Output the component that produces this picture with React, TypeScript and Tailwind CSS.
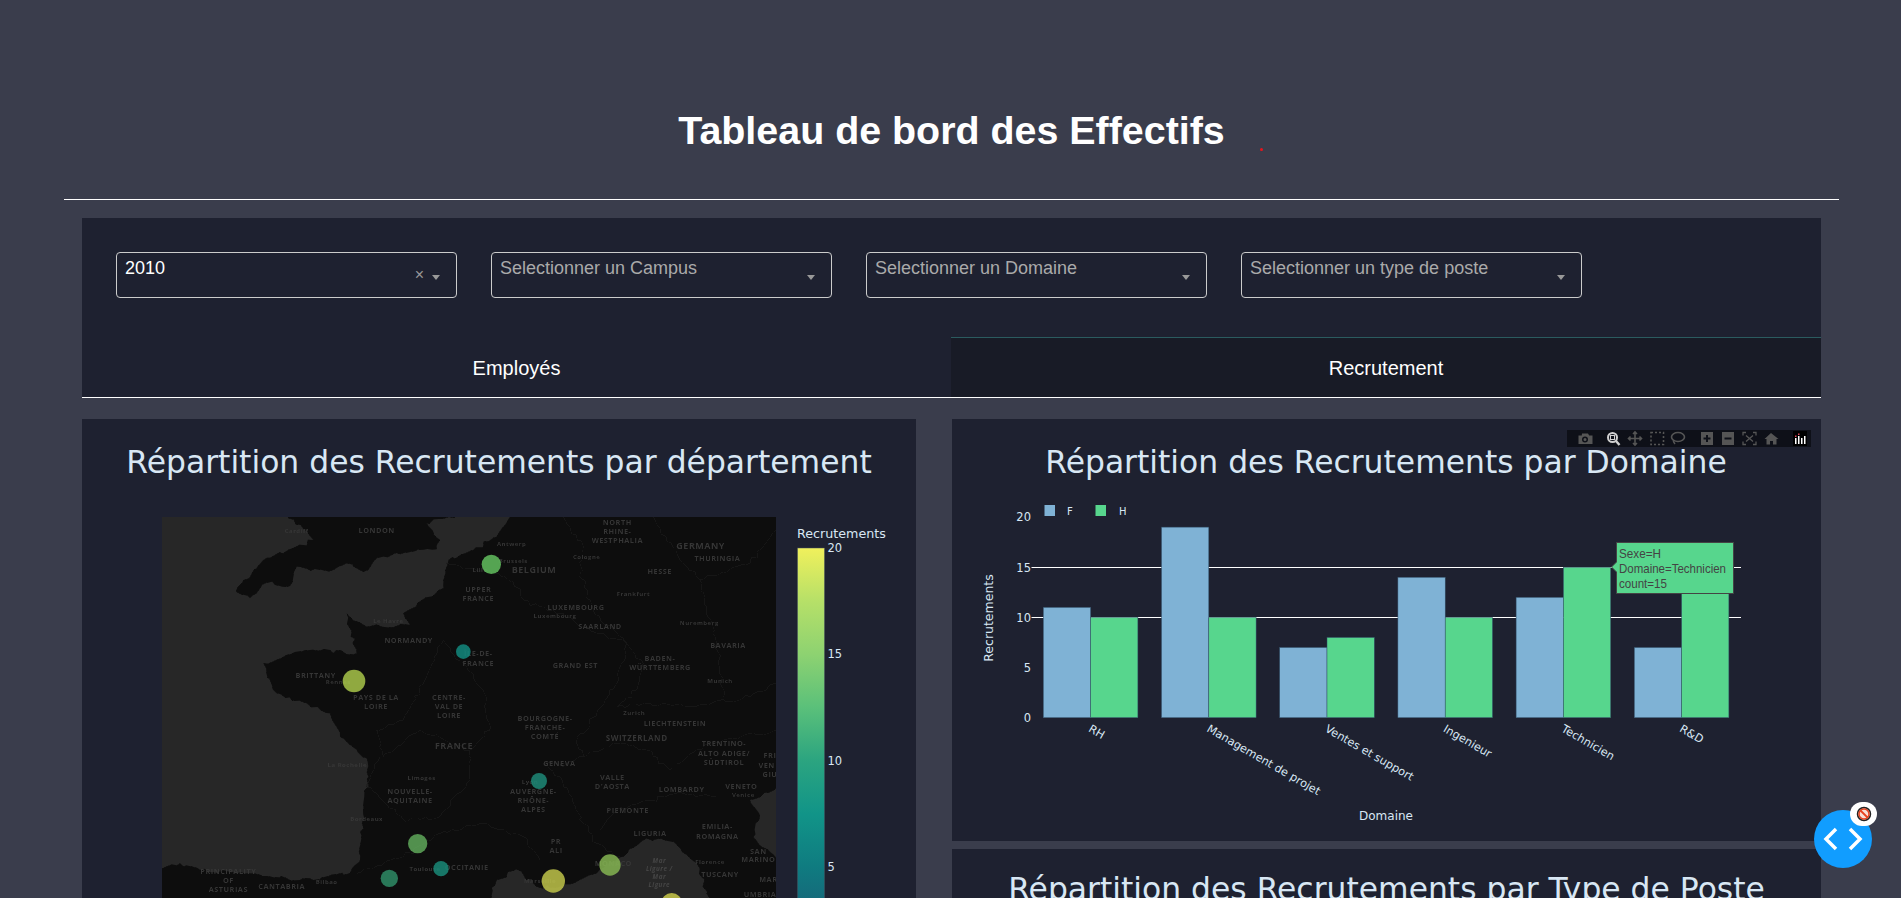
import React from 'react';

const plotFont = '"DejaVu Sans", Verdana, sans-serif';
const SEA = '#272727';
const LAND = '#0a0a0a';
const INK = '#d8e7f4';

// map coordinates are in a 3x space, x from 36, y from 21
const labels: [string, number, number, number?][] = [
  ['Cardiff', 440, 70, 18], ['LONDON', 680, 68, 22], ['Antwerp', 1085, 107, 18], ['Brussels', 1090, 158, 18],
  ['Lille', 990, 187, 18], ['BELGIUM', 1152, 189, 27], ['UPPER', 985, 246], ['FRANCE', 985, 274],
  ['NORTH', 1402, 45], ['RHINE-', 1402, 73], ['WESTPHALIA', 1402, 100], ['Cologne', 1310, 146, 18],
  ['Frankfurt', 1450, 257, 18], ['LUXEMBOURG', 1278, 299], ['Luxembourg', 1215, 325, 18], ['SAARLAND', 1350, 357],
  ['Le Havre', 715, 339, 18], ['NORMANDY', 776, 399], ['ÎLE-DE-', 985, 439], ['FRANCE', 985, 467],
  ['GRAND EST', 1276, 475], ['BRITTANY', 497, 503], ['Rennes', 565, 521, 18], ['PAYS DE LA', 678, 569],
  ['LOIRE', 678, 597], ['CENTRE-', 897, 569], ['VAL DE', 897, 597], ['LOIRE', 897, 625],
  ['BOURGOGNE-', 1185, 633], ['FRANCHE-', 1185, 660], ['COMTÉ', 1185, 688], ['FRANCE', 912, 718, 27],
  ['GENEVA', 1228, 767], ['La Rochelle', 592, 770, 18], ['Limoges', 815, 811, 18], ['Lyon', 1140, 821, 18],
  ['NOUVELLE-', 780, 853], ['AQUITAINE', 780, 880], ['AUVERGNE-', 1150, 853], ['RHÔNE-', 1150, 880],
  ['ALPES', 1150, 907], ['Bordeaux', 650, 933, 18], ['PR', 1218, 1003], ['ALI', 1218, 1030],
  ['Toulouse', 825, 1082, 18], ['OCCITANIE', 950, 1079], ['PRINCIPALITY', 235, 1092], ['OF', 235, 1119],
  ['ASTURIAS', 235, 1147], ['CANTABRIA', 395, 1138], ['Bilbao', 530, 1123, 18], ['Marseille', 1170, 1118, 18],
  ['MONACO', 1390, 1069], ['GERMANY', 1652, 117, 27], ['THURINGIA', 1702, 152], ['HESSE', 1529, 192],
  ['Nuremberg', 1648, 346, 18], ['BAVARIA', 1734, 413], ['BADEN-', 1530, 453], ['WÜRTTEMBERG', 1530, 481],
  ['Munich', 1710, 518, 18], ['Zurich', 1453, 616, 18], ['LIECHTENSTEIN', 1575, 648], ['SWITZERLAND', 1460, 692, 24],
  ['TRENTINO-', 1722, 709], ['ALTO ADIGE/', 1722, 737], ['SÜDTIROL', 1722, 765], ['VALLE', 1387, 810],
  ["D'AOSTA", 1387, 838], ['LOMBARDY', 1595, 846], ['VENETO', 1774, 836], ['Venice', 1780, 860, 18],
  ['PIEMONTE', 1433, 908], ['LIGURIA', 1500, 979], ['EMILIA-', 1702, 958], ['ROMAGNA', 1702, 986],
  ['SAN', 1825, 1032], ['MARINO', 1825, 1056], ['Florence', 1680, 1062, 18], ['TUSCANY', 1710, 1102],
  ['UMBRIA', 1830, 1160], ['FRI', 1860, 745], ['VEN', 1850, 773], ['GIU', 1860, 801], ['MAR', 1855, 1115],
];

const borders = [
  'M890 160L960 175L1030 190L1090 215L1120 270L1170 290L1240 310L1290 350L1430 400L1400 520L1340 610L1280 700L1300 740L1240 770L1180 760',
  'M1180 760L1230 800L1270 880L1300 940L1340 1000L1410 1040',
  'M1430 400L1480 460L1460 540L1400 590L1500 580L1620 590L1800 560L1878 520',
  'M1300 740L1400 700L1490 720L1560 780L1640 720L1720 690L1878 660',
  'M1240 21L1300 110L1290 190L1330 300L1430 400',
  'M620 1090L760 1040L870 970L990 940L1120 980L1170 1050',
  'M880 390L830 500L760 630L680 660L700 740L810 660L960 720L1020 660L1000 540L880 390',
  'M690 740L650 830L760 930L870 920L960 810L960 720',
  'M1510 21L1590 150L1650 210L1700 400L1720 560',
  'M1650 210L1800 160L1878 60',
  'M1700 860L1600 850L1500 870L1400 900L1350 960',
];

// outlines run well past the map frame so the jitter can't open gaps at its edges
const britain = 'M380 -20L490 90L340 150L258 245L300 265L350 218L420 228L440 170L530 183L590 160L640 185L700 140L860 118L870 90L830 40L1060 -20Z';
const continent = 'M1110 -20L1040 80L970 120L895 150L880 235L760 310L780 345L650 350L590 310L620 430L480 420L340 460L380 550L470 580L540 610L570 680L650 745L655 800L640 900L630 1050L600 1090L450 1110L300 1090L150 1080L90 1060L0 1090L0 1210L1000 1210L1040 1110L1100 1078L1160 1130L1230 1130L1340 1090L1420 1040L1490 985L1570 995L1640 1060L1690 1210L1920 1210L1920 1080L1810 980L1830 920L1800 870L1920 820L1920 -20Z';

// breaks straight segments up so coasts and borders don't look ruled
function rough(d: string, amp: number) {
  const closed = d.endsWith('Z');
  const pts = d.replace(/[MZ]/g, '').split('L').map((p) => p.trim().split(' ').map(Number));
  let seed = 7;
  const next = () => {
    seed = (seed * 9301 + 49297) % 233280;
    return seed / 233280 - 0.5;
  };
  const out: string[] = [];
  pts.forEach(([x, y], i) => {
    const to = pts[i + 1];
    out.push(`${x} ${y}`);
    if (!to) return;
    const steps = Math.max(1, Math.round(Math.hypot(to[0] - x, to[1] - y) / 14));
    for (let s = 1; s < steps; s++) {
      const t = s / steps;
      out.push(`${(x + (to[0] - x) * t + next() * amp).toFixed(1)} ${(y + (to[1] - y) * t + next() * amp).toFixed(1)}`);
    }
  });
  return `M${out.join('L')}${closed ? 'Z' : ''}`;
}

const bubbles = [
  [1024, 163, 29, '#63c05f'], [940, 425, 22, '#138a7f'], [612, 513, 34, '#a8c64a'], [1167, 813, 24, '#1e8a78'],
  [803, 1001, 29, '#5fa85a'], [873, 1076, 23, '#1a8a78'], [718, 1105, 26, '#2f8c66'], [1210, 1113, 35, '#c0c44a'],
  [1380, 1065, 32, '#85b552'], [1565, 1180, 31, '#c8c84a'],
];

const MapPlot = () => (
  <svg className="block" width="834" height="479" viewBox="82 419 834 479" style={{ fontFamily: plotFont }}>
    <text x="499" y="472.5" textAnchor="middle" fontSize="31.4" fill={INK}>Répartition des Recrutements par département</text>
    <svg x="162" y="517" width="614" height="381" viewBox="36 21 1842 1143">
      <defs>
        <filter id="mapBlur"><feGaussianBlur stdDeviation="1.3" /></filter>
      </defs>
      <rect x="36" y="21" width="1842" height="1143" fill={SEA} />
      <g filter="url(#mapBlur)">
        <path fill={LAND} d={rough(britain, 12)} />
        <path fill={LAND} d={rough(continent, 12)} />
        <g fill="none" stroke="#1b1b1b" strokeWidth="2.5">
          {borders.map((d) => <path key={d} d={rough(d, 14)} />)}
        </g>
        <g fontFamily='"Open Sans", sans-serif' fontWeight="700" textAnchor="middle" fill="#363636" letterSpacing="1.5">
          {labels.map(([t, x, y, s]) => <text key={t + x} x={x} y={y} fontSize={s ?? 22}>{t}</text>)}
          {['Mar', 'Ligure /', 'Mar', 'Ligure'].map((t, i) => (
            <text key={i} x="1528" y={1060 + i * 24} fontSize="19" fontStyle="italic" fill="#444">{t}</text>
          ))}
        </g>
      </g>
      {bubbles.map(([x, y, r, c]) => (
        <circle key={`${x}`} cx={x} cy={y} r={r} fill={c as string} fillOpacity="0.85" />
      ))}
    </svg>
    <defs>
      <linearGradient id="viridis" x1="0" y1="0" x2="0" y2="1">
        <stop offset="0" stopColor="#f0f05c" />
        <stop offset="0.125" stopColor="#b6e068" />
        <stop offset="0.25" stopColor="#8dd271" />
        <stop offset="0.375" stopColor="#5ac07a" />
        <stop offset="0.5" stopColor="#2ba480" />
        <stop offset="0.625" stopColor="#119488" />
        <stop offset="0.75" stopColor="#0f7b80" />
        <stop offset="1" stopColor="#24456f" />
      </linearGradient>
    </defs>
    <rect x="797.5" y="548" width="27" height="426" fill="url(#viridis)" stroke="#44505c" strokeWidth="0.5" />
    <text x="797" y="538" fontSize="12.7" fill={INK}>Recrutements</text>
    {[['20', 552], ['15', 658], ['10', 765], ['5', 871]].map(([t, y]) => (
      <text key={t} x="827.5" y={y} fontSize="11.5" fill={INK}>{t}</text>
    ))}
  </svg>
);

const groups = [
  { name: 'RH', f: 11, h: 10 },
  { name: 'Management de projet', f: 19, h: 10 },
  { name: 'Ventes et support', f: 7, h: 8 },
  { name: 'Ingenieur', f: 14, h: 10 },
  { name: 'Technicien', f: 12, h: 15 },
  { name: 'R&D', f: 7, h: 13 },
];

const BarPlot = () => {
  const base = 717.7;
  const unit = 10.03;
  return (
    <svg className="block" width="869" height="422" viewBox="952 419 869 422" style={{ fontFamily: plotFont }}>
      <text x="1386" y="472.5" textAnchor="middle" fontSize="31.4" fill={INK}>Répartition des Recrutements par Domaine</text>
      <line x1="1031.5" x2="1741" y1="567.5" y2="567.5" stroke="#fff" />
      <line x1="1031.5" x2="1741" y1="617.5" y2="617.5" stroke="#fff" />
      {[['20', 521], ['15', 571.5], ['10', 621.5], ['5', 671.5], ['0', 722]].map(([t, y]) => (
        <text key={t} x="1031" y={y} textAnchor="end" fontSize="11.5" fill={INK}>{t}</text>
      ))}
      {groups.map((g, i) => {
        const x = 1043.3 + i * 118.2;
        return (
          <g key={g.name} strokeWidth="0.5" stroke="#33506a">
            <rect x={x} y={base - g.f * unit} width="47.3" height={g.f * unit} fill="#7fb2d5" />
            <rect x={x + 47.3} y={base - g.h * unit} width="47.3" height={g.h * unit} fill="#57d68d" />
            <text x={x + 44.5} y="731" fontSize="11.3" stroke="none" fill={INK} transform={`rotate(30 ${x + 44.5} 731)`}>{g.name}</text>
          </g>
        );
      })}
      <text transform="rotate(-90 993 618)" x="993" y="618" textAnchor="middle" fontSize="12.5" fill={INK}>Recrutements</text>
      <text x="1386" y="820" textAnchor="middle" fontSize="12" fill={INK}>Domaine</text>
      <rect x="1044.5" y="505" width="10.5" height="11" fill="#7fb2d5" />
      <text x="1067" y="515" fontSize="10" fill={INK}>F</text>
      <rect x="1095.5" y="505" width="10.5" height="11" fill="#57d68d" />
      <text x="1119" y="515" fontSize="10" fill={INK}>H</text>
      <path d="M1611.5 567L1616.500 562V542.500H1733.500V593.500H1616.500V572Z" fill="#57d68d" stroke="#444" strokeWidth="1" />
      <g fontFamily='"Liberation Sans", Arial, sans-serif' fontSize="13" fill="#444">
        <text x="1619" y="558" textLength="42" lengthAdjust="spacingAndGlyphs">Sexe=H</text>
        <text x="1619" y="573" textLength="107" lengthAdjust="spacingAndGlyphs">Domaine=Technicien</text>
        <text x="1619" y="588" textLength="48" lengthAdjust="spacingAndGlyphs">count=15</text>
      </g>
    </svg>
  );
};

const ModeBar = () => (
  <div className="absolute left-[615px] top-[11px] flex h-[17px] w-[244px] bg-[#0e1018]">
    <svg width="244" height="17" viewBox="0 0 244 17">
      <g fill="#555">
        {/* camera */}
        <path fillRule="evenodd" d="M15 3.500h6l1.200 2h3.300v8.500h-14v-8.500h3.300zM18 6.500a3 3 0 1 0 0 6a3 3 0 0 0 0-6zM18 8a1.500 1.500 0 1 1 0 3a1.500 1.500 0 0 1 0-3z" />
      </g>
      {/* zoom, active */}
      <g fill="none" stroke="#d0d0d0">
        <circle cx="45.500" cy="7.500" r="4.500" strokeWidth="2" />
        <rect x="43.500" y="5.500" width="4" height="4" strokeWidth="1" />
        <path d="M49 11l3.500 4" strokeWidth="2.400" />
      </g>
      <g fill="none" stroke="#555" strokeWidth="1.600">
        {/* pan */}
        <path d="M68 2v13M61.500 8.500h13M66 4l2-2 2 2M66 13l2 2 2-2M63.500 6.500l-2 2 2 2M72.500 6.500l2 2-2 2" />
        {/* box select */}
        <rect x="84" y="2.500" width="12.500" height="12" strokeDasharray="2 2" />
        {/* lasso */}
        <ellipse cx="111" cy="7" rx="6.500" ry="4.500" />
        <path d="M106.500 10c-.5 2 .5 3 1.500 4" />
      </g>
      <g fill="#555">
        <path fillRule="evenodd" d="M134 2h12v13h-12zM139 5v2.500h-2.500v2h2.500v2.500h2v-2.500h2.500v-2h-2.500v-2.500z" />
        <path fillRule="evenodd" d="M155 2h12v13h-12zM157.500 7.500v2h7v-2z" />
        <path d="M204 3l7.500 6h-2v5.500h-3.500v-3.500h-3v3.500h-3.500v-5.500h-2z" />
      </g>
      <g fill="none" stroke="#555" strokeWidth="1.300">
        <path d="M176 5.500v-3h3M186 2.500h3v3M189 11.500v3h-3M179 14.500h-3v-3" />
        <path d="M179 5.500l7 6M186 5.500l-7 6" />
      </g>
      <rect x="226" y="1" width="14" height="15" fill="#000" />
      <g fill="#fff">
        <rect x="228" y="8" width="1.500" height="6" />
        <rect x="231" y="6" width="1.500" height="8" />
        <rect x="234" y="8" width="1.500" height="6" />
        <rect x="237" y="6" width="1.500" height="8" />
      </g>
      <g fill="#e0435a">
        <rect x="228" y="5.500" width="1.500" height="1.500" />
        <rect x="231" y="3.500" width="1.500" height="1.500" />
      </g>
    </svg>
  </div>
);

const Dropdown = ({ label, selected }: { label: string; selected?: boolean }) => (
  <div className="relative h-[46px] w-[341px] rounded border border-[#cccccc] bg-[#1e2130] pl-[8px] pt-[3px] text-[18px] leading-[25px]">
    <span className={selected ? 'text-white' : 'text-[#aaaaaa]'}>{label}</span>
    {selected && <span className="absolute right-[32px] top-[13px] text-[16px] leading-[18px] text-[#999]">×</span>}
    <span className="absolute right-[16px] top-[22px] h-0 w-0 border-x-[4px] border-t-[5px] border-x-transparent border-t-[#999]" />
  </div>
);

export default function App() {
  return (
    <div className="relative h-screen overflow-hidden bg-[#3a3d4c] text-white" style={{ fontFamily: '"Liberation Sans", Arial, sans-serif' }}>
      <div className="ml-[64px] w-[1775px]">
        <h1 className="pt-[107px] pb-[46px] text-center text-[39.4px] font-bold leading-[46px]">Tableau de bord des Effectifs</h1>
        <hr className="border-0 border-t border-white" />
        <div className="mx-[18px] mt-[18px] w-[1739px] bg-[#1e2130]">
          <div className="flex gap-[34px] px-[34px] pt-[34px] pb-[39px]">
            <Dropdown label="2010" selected />
            <Dropdown label="Selectionner un Campus" />
            <Dropdown label="Selectionner un Domaine" />
            <Dropdown label="Selectionner un type de poste" />
          </div>
          <div className="flex h-[61px] border-b border-white text-[20px]">
            <div className="flex w-[869px] items-center justify-center pt-[2px]">Employés</div>
            <div className="flex flex-1 items-center justify-center border-t border-[#2b5b5f] bg-[#181b26] pt-[1px]">Recrutement</div>
          </div>
        </div>
        <div className="mx-[18px] mt-[21px] flex w-[1739px] gap-[36px]">
          <div className="w-[834px] shrink-0 bg-[#1e2130]">
            <MapPlot />
          </div>
          <div className="flex flex-1 flex-col gap-[8px]">
            <div className="relative bg-[#1e2130]">
              <BarPlot />
              <ModeBar />
            </div>
            <div className="h-[120px] bg-[#1e2130] pt-[22px] text-center text-[31.4px] leading-[36px] text-[#d8e7f4] whitespace-nowrap" style={{ fontFamily: plotFont }}>
              Répartition des Recrutements par Type de Poste
            </div>
          </div>
        </div>
      </div>

      {/* dash debug button */}
      <div className="fixed left-[1814px] top-[810px] flex h-[58px] w-[58px] items-center justify-center rounded-full bg-[#119dff]">
        <svg width="40" height="26" viewBox="0 0 40 26" fill="none" stroke="#fff" strokeWidth="3.500">
          <path d="M13 3L3 13L13 23M27 3L37 13L27 23" />
        </svg>
      </div>
      <div className="fixed left-[1850px] top-[802px] flex h-[24px] w-[27px] items-center justify-center rounded-full bg-white">
        <svg width="16" height="16" viewBox="0 0 16 16">
          <circle cx="8" cy="8" r="6.500" fill="#f7e0d8" stroke="#222" strokeWidth="1.500" />
          <circle cx="8" cy="8" r="5" fill="none" stroke="#e8431f" strokeWidth="1.500" />
          <path d="M4.500 4.500L11.500 11.500" stroke="#e8431f" strokeWidth="1.800" />
        </svg>
      </div>
      <span className="absolute left-[1260px] top-[148px] h-[3px] w-[3px] rounded-full bg-[#e8141c]" />
    </div>
  );
}
